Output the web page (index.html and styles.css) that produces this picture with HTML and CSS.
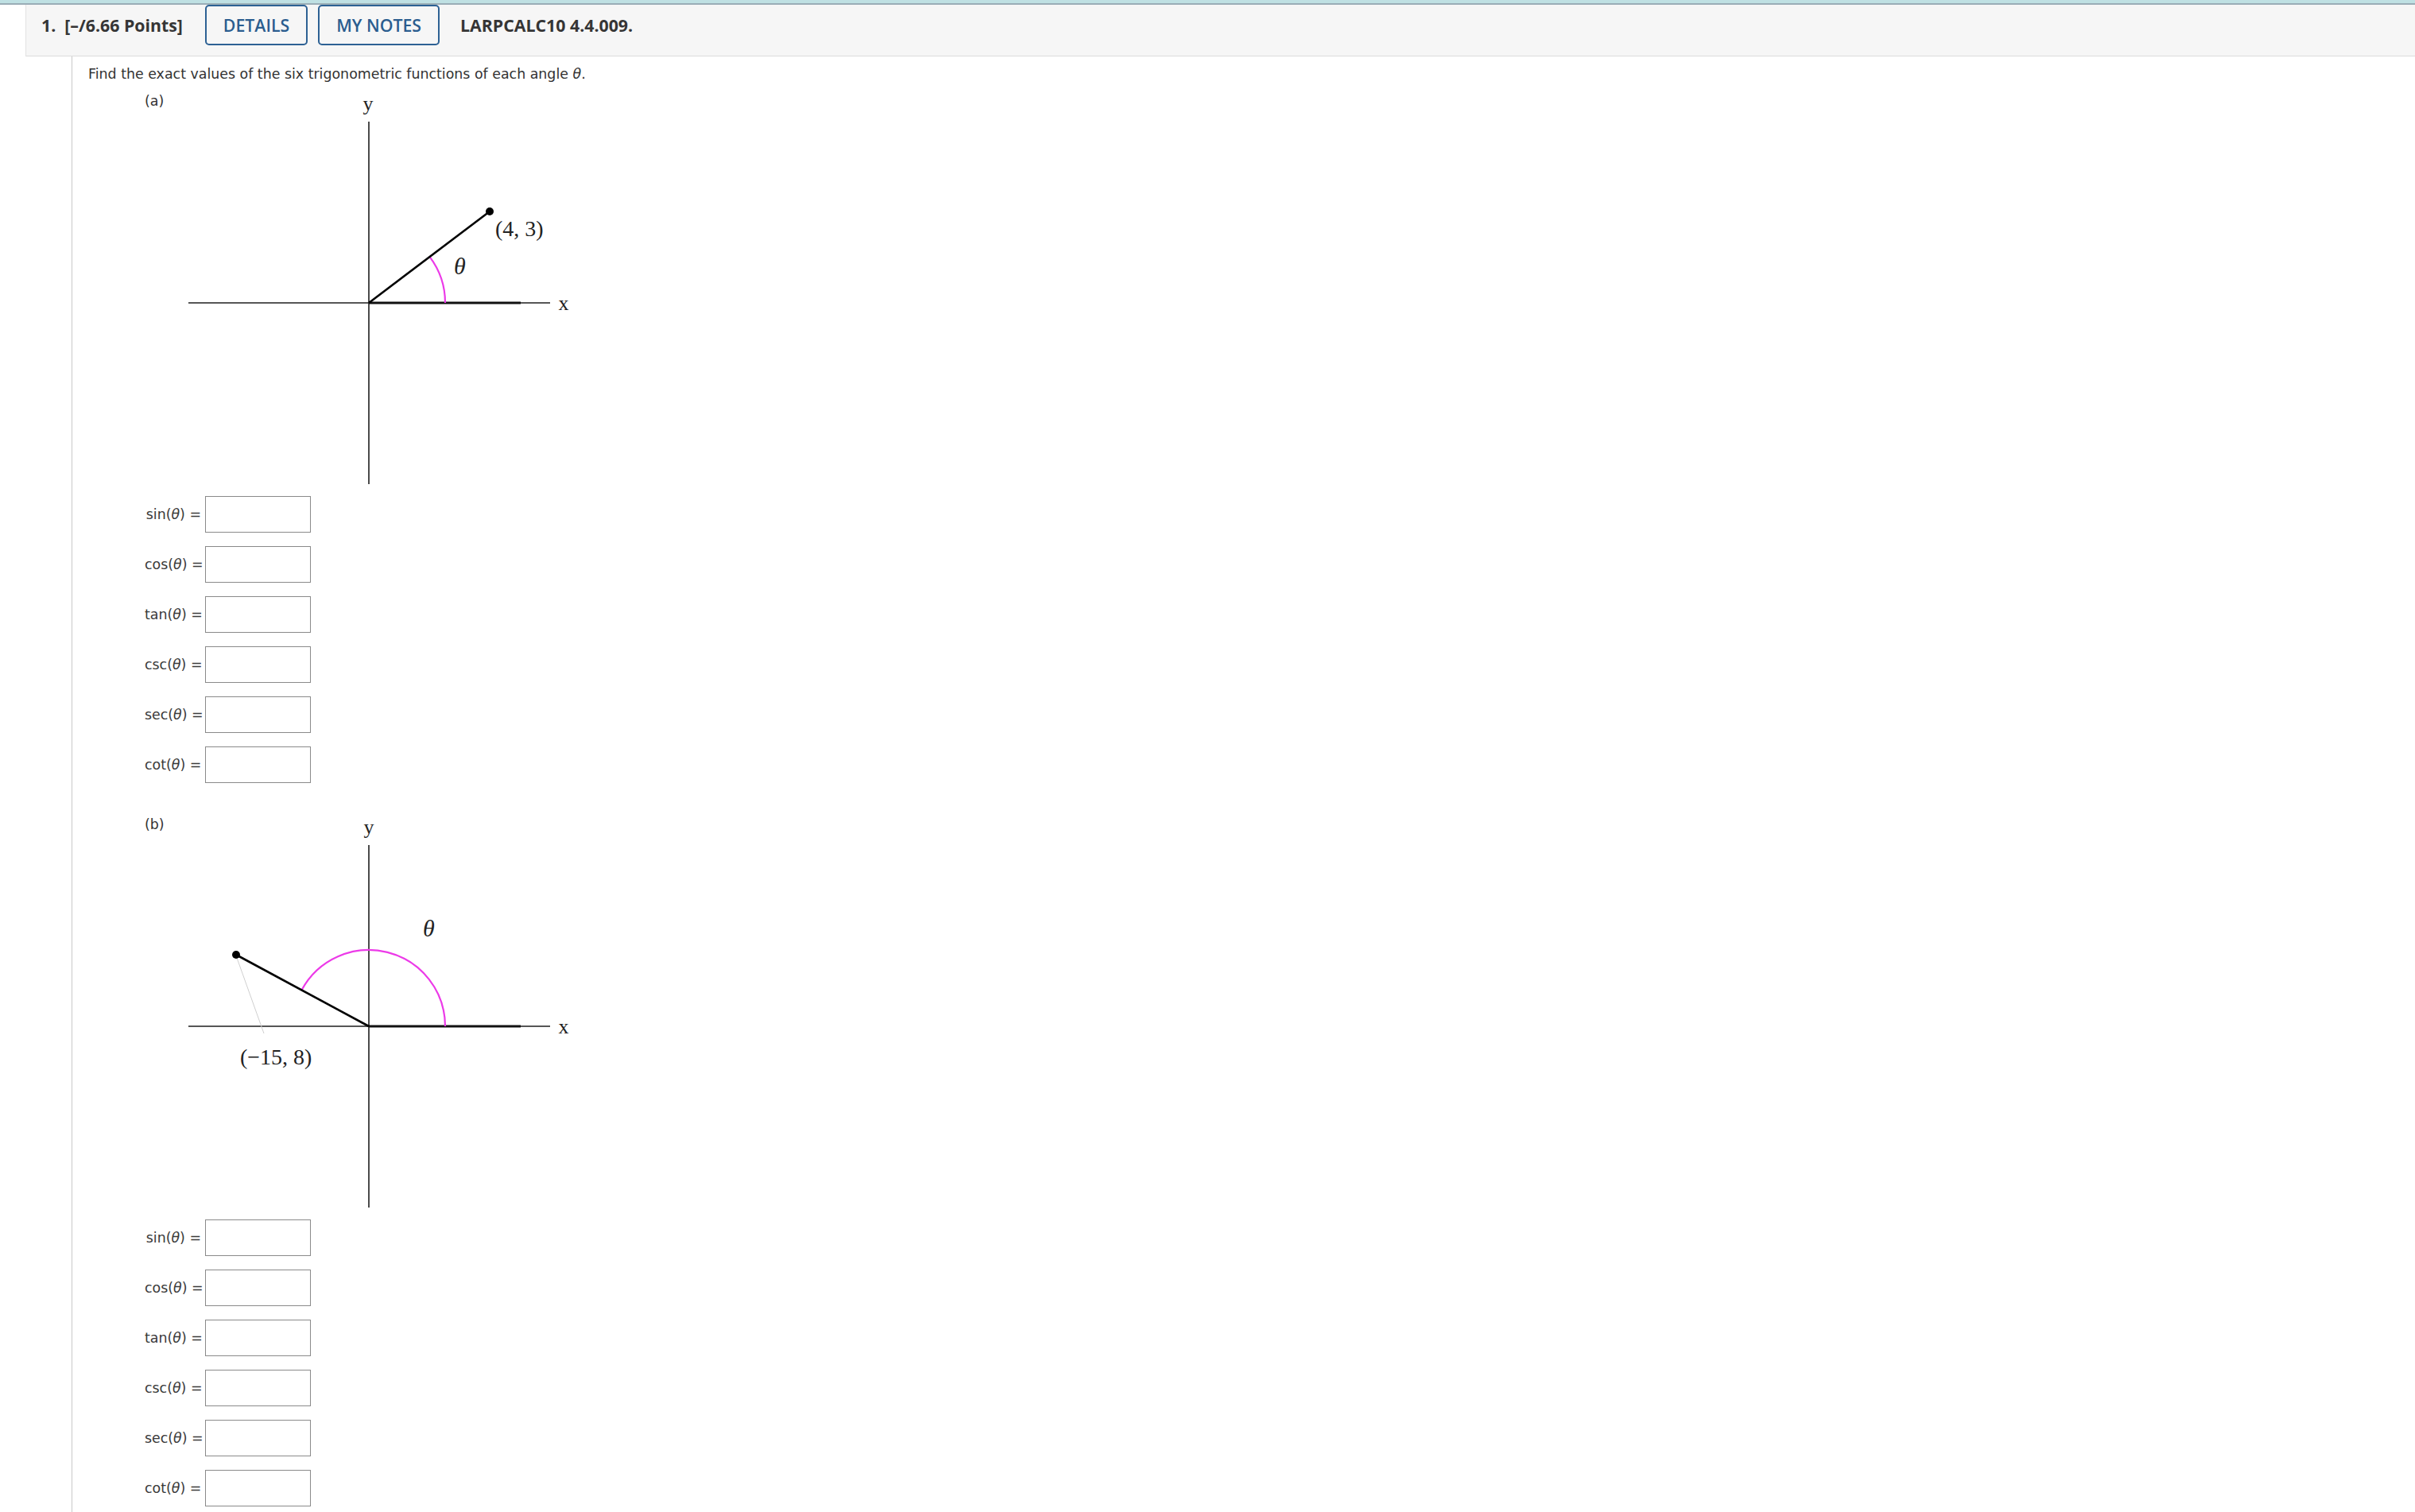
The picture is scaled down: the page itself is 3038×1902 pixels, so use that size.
FILE: index.html
```html
<!DOCTYPE html>
<html lang="en">
<head>
<meta charset="utf-8">
<title>LARPCALC10 4.4.009</title>
<link rel="stylesheet" href="styles.css">
</head>
<body>
<div class="topbar"></div>
<div class="question">
  <div class="q-header">
    <span class="q-num">1.</span>
    <span class="q-points">[–/6.66 Points]</span>
    <button class="q-btn q-btn-details" type="button">DETAILS</button>
    <button class="q-btn q-btn-notes" type="button">MY NOTES</button>
    <span class="q-code">LARPCALC10 4.4.009.</span>
  </div>
  <div class="q-body">
    <p class="prompt">Find the exact values of the six trigonometric functions of each angle <i class="it">θ</i>.</p>

    <section class="part">
      <div class="part-head">
        <span class="part-label">(a)</span>
        <svg class="figure" width="500" height="500" viewBox="0 0 500 500">
          <line class="axis" x1="7" y1="266" x2="462" y2="266"/>
          <line class="axis" x1="234" y1="38" x2="234" y2="494"/>
          <line class="initial" x1="234" y1="266" x2="425" y2="266"/>
          <path class="arc" d="M 330 266 A 96 96 0 0 0 310.8 208.4"/>
          <line class="terminal" x1="234" y1="266" x2="386" y2="151"/>
          <circle class="dot" cx="386" cy="151" r="5"/>
          <text class="axis-label" x="233" y="24">y</text>
          <text class="axis-label" x="479" y="275">x</text>
          <text class="theta" x="341" y="230">θ</text>
          <text class="coord" x="393" y="182">(4, 3)</text>
        </svg>
      </div>
      <div class="answers">
        <div class="answer-row"><label class="fn">sin(<i class="it">θ</i>) =</label><input class="answer-box" type="text"></div>
        <div class="answer-row"><label class="fn">cos(<i class="it">θ</i>) =</label><input class="answer-box" type="text"></div>
        <div class="answer-row"><label class="fn">tan(<i class="it">θ</i>) =</label><input class="answer-box" type="text"></div>
        <div class="answer-row"><label class="fn">csc(<i class="it">θ</i>) =</label><input class="answer-box" type="text"></div>
        <div class="answer-row"><label class="fn">sec(<i class="it">θ</i>) =</label><input class="answer-box" type="text"></div>
        <div class="answer-row"><label class="fn">cot(<i class="it">θ</i>) =</label><input class="answer-box" type="text"></div>
      </div>
    </section>

    <section class="part">
      <div class="part-head">
        <span class="part-label">(b)</span>
        <svg class="figure" width="500" height="500" viewBox="0 0 500 500">
          <line class="axis" x1="7" y1="266" x2="462" y2="266"/>
          <line class="axis" x1="234" y1="38" x2="234" y2="494"/>
          <line class="initial" x1="234" y1="266" x2="425" y2="266"/>
          <path class="arc" d="M 330 266 A 96 96 0 0 0 149.3 220.8"/>
          <line class="leader" x1="68" y1="180" x2="102" y2="275"/>
          <line class="terminal" x1="234" y1="266" x2="67" y2="176"/>
          <circle class="dot" cx="67" cy="176" r="5"/>
          <text class="axis-label" x="234" y="24">y</text>
          <text class="axis-label" x="479" y="275">x</text>
          <text class="theta" x="302" y="153">θ</text>
          <text class="coord" x="72" y="314">(−15, 8)</text>
        </svg>
      </div>
      <div class="answers">
        <div class="answer-row"><label class="fn">sin(<i class="it">θ</i>) =</label><input class="answer-box" type="text"></div>
        <div class="answer-row"><label class="fn">cos(<i class="it">θ</i>) =</label><input class="answer-box" type="text"></div>
        <div class="answer-row"><label class="fn">tan(<i class="it">θ</i>) =</label><input class="answer-box" type="text"></div>
        <div class="answer-row"><label class="fn">csc(<i class="it">θ</i>) =</label><input class="answer-box" type="text"></div>
        <div class="answer-row"><label class="fn">sec(<i class="it">θ</i>) =</label><input class="answer-box" type="text"></div>
        <div class="answer-row"><label class="fn">cot(<i class="it">θ</i>) =</label><input class="answer-box" type="text"></div>
      </div>
    </section>
  </div>
</div>
</body>
</html>
```

FILE: styles.css
```css
html, body {
  margin: 0;
  padding: 0;
  background: #ffffff;
}

body {
  font-family: "DejaVu Sans", Verdana, sans-serif;
  font-size: 17.4px;
  color: #333333;
}

.topbar {
  height: 4px;
  background: #bfe0e3;
  border-bottom: 2px solid #9aadb6;
}

.question {
  margin-left: 32px;
}

.q-header {
  box-sizing: border-box;
  height: 65px;
  display: flex;
  align-items: center;
  padding: 0 0 13px 19px;
  background: #f6f6f6;
  border-left: 1px solid #e3e3e3;
  border-bottom: 1px solid #dcdcdc;
  font-family: "Open Sans", "Noto Sans", sans-serif;
  font-size: 21.3px;
  font-weight: 700;
  color: #353535;
  white-space: nowrap;
}

.q-num {
  margin-right: 11px;
}

.q-points {
  margin-right: 28px;
}

.q-btn {
  box-sizing: border-box;
  height: 51px;
  padding: 0 21px;
  margin: 0;
  background: transparent;
  border: 2px solid #2d6194;
  border-radius: 5px;
  font-family: "Open Sans", "Noto Sans", sans-serif;
  font-size: 21.3px;
  font-weight: 600;
  color: #2b5d8f;
  line-height: 1;
}

.q-btn-details {
  margin-right: 13px;
}

.q-btn-notes {
  margin-right: 26px;
}

.q-body {
  margin-left: 58px;
  border-left: 1px solid #c9c9c9;
  padding: 12px 0 40px 20px;
  min-height: 1800px;
}

.prompt {
  margin: 0;
  line-height: normal;
}

.it {
  font-style: italic;
}

.part {
  margin-top: 12px;
  padding-left: 71px;
}

.part + .part {
  margin-top: 40px;
}

.part-head {
  display: flex;
  align-items: flex-start;
}

.part-label {
  width: 48px;
  margin-top: 2px;
  line-height: normal;
}

.figure {
  display: block;
  overflow: visible;
}

.figure .axis {
  stroke: #1e1e1e;
  stroke-width: 1.6;
}

.figure .initial {
  stroke: #111111;
  stroke-width: 3;
}

.figure .terminal {
  stroke: #000000;
  stroke-width: 2.6;
}

.figure .arc {
  fill: none;
  stroke: #ec3ae8;
  stroke-width: 2.2;
}

.figure .leader {
  stroke: #cfcfcf;
  stroke-width: 1;
}

.figure .dot {
  fill: #000000;
}

.figure text {
  font-family: "Liberation Serif", "Times New Roman", serif;
  fill: #222222;
}

.figure .axis-label {
  font-size: 26px;
  text-anchor: middle;
}

.figure .theta {
  font-size: 30px;
  font-style: italic;
}

.figure .coord {
  font-size: 28px;
}

.answers {
  margin-top: 9px;
}

.answer-row {
  display: flex;
  align-items: center;
  height: 46px;
  margin-bottom: 17px;
}

.answer-row:last-child {
  margin-bottom: 0;
}

.fn {
  width: 71px;
  margin-right: 5px;
  text-align: right;
  white-space: nowrap;
  color: #3a3a3a;
}

.answer-box {
  box-sizing: border-box;
  width: 133px;
  height: 46px;
  margin: 0;
  padding: 0 6px;
  border: 1px solid #8a8a8a;
  border-radius: 0;
  background: #ffffff;
  font-family: "DejaVu Sans", Verdana, sans-serif;
  font-size: 17.4px;
}
```
